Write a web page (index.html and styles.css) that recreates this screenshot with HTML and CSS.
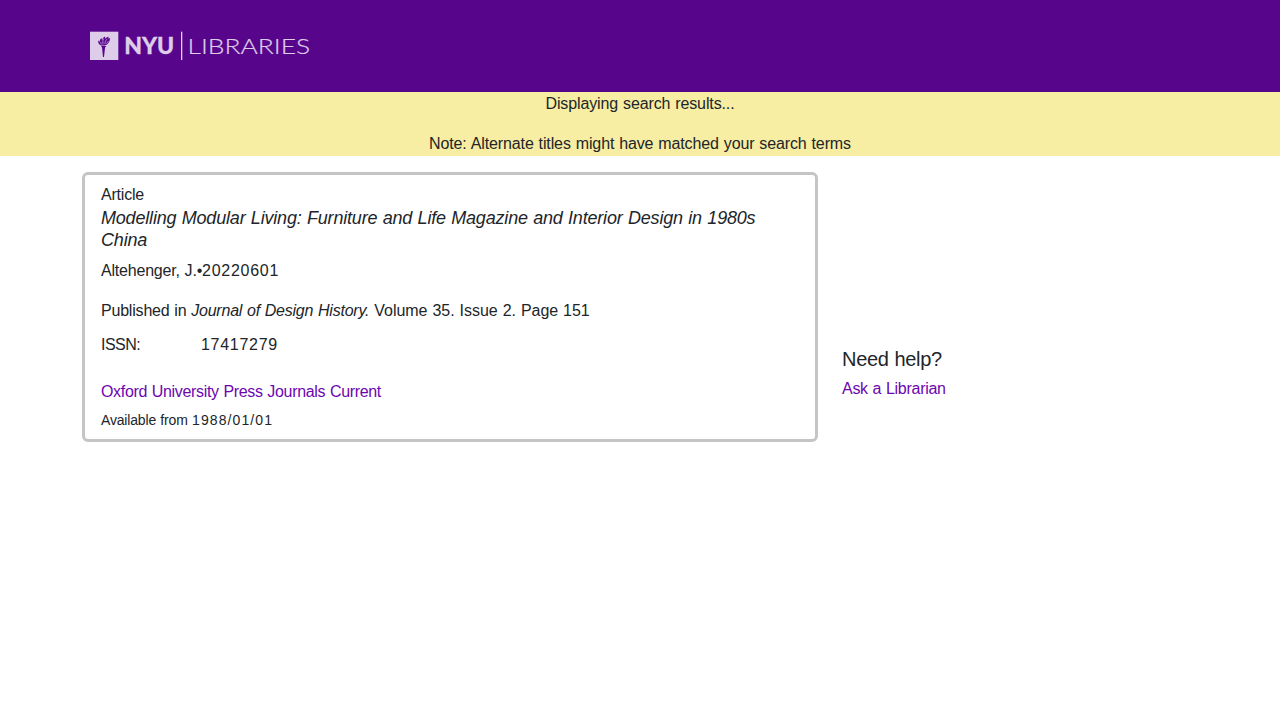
FILE: index.html
```html
<!DOCTYPE html>
<html lang="en">
<head>
<meta charset="utf-8">
<title>NYU Libraries</title>
<link rel="stylesheet" href="styles.css">
</head>
<body>
<header class="header">
  <div class="container">
    <svg class="logo" width="222" height="30" viewBox="0 0 222 30" role="img" aria-label="NYU Libraries">
      <rect x="0" y=".7" width="28.3" height="28.3" fill="#decde9"/>
      <path d="M11.300 15h4.600v.9l-.8.300-1.100 9.800h-1l-1-9.800-.7-.3z" fill="#57068c"/>
      <path d="M11.300 14.400C9 13.800 7.600 11.800 8.400 9.200c.4.900.8 1.200 1.400 1.500-.3-1.900.7-3 1.900-3.800 0 1.100.2 1.500.7 2 .2-1.700 1.300-2.700 2.800-3.300-.3 1.200-.1 1.600.2 2.100.7-1.100 2-1.900 3.400-2-.5.900-.4 1.500-.1 2.100.5-.4 1-.5 1.600-.5-.6.900-.4 1.700-.8 2.700-.8 2.200-2.700 4.200-5.100 4.400z" fill="#57068c"/>
      <path d="M11.200 13.500l-.5-2.700M13 13.500l-.2-3.500 1-2.400M14.900 13.200l.4-2.700 1.700-2.600M16.500 12.600l1.900-2.600" stroke="#decde9" stroke-width=".6" fill="none"/>
      <text class="logo-nyu" x="34.200" y="22.900" textLength="50" lengthAdjust="spacingAndGlyphs">NYU</text>
      <rect x="91" y=".7" width="1.300" height="28.300" fill="#decde9"/>
      <text class="logo-lib" x="97.600" y="22.900" textLength="122.500" lengthAdjust="spacingAndGlyphs">LIBRARIES</text>
    </svg>
  </div>
</header>
<div class="notice">
  <p class="displaying">Displaying search results...</p>
  <p class="note">Note: Alternate titles might have matched your search terms</p>
</div>
<main class="container row">
  <section class="card">
    <p class="kind">Article</p>
    <h1 class="title">Modelling Modular Living: Furniture and Life Magazine and Interior Design in 1980s China</h1>
    <p class="author">Altehenger, J.•<span class="digits">20220601</span></p>
    <p class="published"><span class="lead">Published in </span><i>Journal of Design History.</i> Volume 35. Issue 2. Page 151</p>
    <dl class="issn"><dt>ISSN:</dt><dd class="digits">17417279</dd></dl>
    <a class="link source" href="#">Oxford University Press Journals Current</a>
    <p class="coverage">Available from <span class="date">1988/01/01</span></p>
  </section>
  <aside class="help">
    <h2>Need help?</h2>
    <a class="link ask" href="#">Ask a Librarian</a>
  </aside>
</main>
</body>
</html>
```
FILE: styles.css
```css
* { box-sizing: border-box; }
body { margin: 0; background: #fff; color: #212529; font: 16px/24px "Liberation Sans", Arial, sans-serif; letter-spacing: -.2px; word-spacing: .6px; }
p, h1, h2, dl, dd { margin: 0; font-weight: 400; }
.container { width: 1140px; margin: 0 auto; padding: 0 12px; }
.header { height: 92px; background: #57068c; }
.header .container { padding: 31px 20px 0; }
.logo { display: block; letter-spacing: 0; word-spacing: 0; }
.logo-nyu { font: 900 22px Lato, sans-serif; fill: #decde9; stroke: #decde9; stroke-width: .3px; }
.logo-lib { font: 300 22px Lato, sans-serif; fill: #decde9; stroke: #decde9; stroke-width: .2px; }
.notice { height: 64px; background: #f7eda3; text-align: center; letter-spacing: -.12px; }
.notice p + p { margin-top: 16px; }
.row { display: flex; gap: 24px; margin-top: 16px; }
.card { width: 736px; height: 270px; padding: 8px 16px 0; border: 3px solid #c5c5c5; border-radius: 6px; }
.title { font-size: 18px; font-style: italic; line-height: 22px; letter-spacing: -.19px; }
.digits { letter-spacing: .72px; }
.author { margin-top: 8px; }
.published { margin-top: 16px; letter-spacing: -.04px; }
.published .lead { letter-spacing: -.2px; }
.published i { letter-spacing: -.22px; }
.issn { display: flex; margin-top: 10px; letter-spacing: -.5px; }
.issn dt { width: 100px; }
.link { display: block; color: #6c06b0; text-decoration: none; letter-spacing: -.33px; }
.source { margin-top: 23px; }
.coverage { font-size: 14px; line-height: 21px; margin-top: 6px; letter-spacing: -.17px; }
.date { letter-spacing: 1.1px; }
.help { padding-top: 175px; }
.help h2 { font-size: 20px; line-height: 24px; letter-spacing: -.3px; }
.ask { margin-top: 6px; letter-spacing: -.28px; }
```
